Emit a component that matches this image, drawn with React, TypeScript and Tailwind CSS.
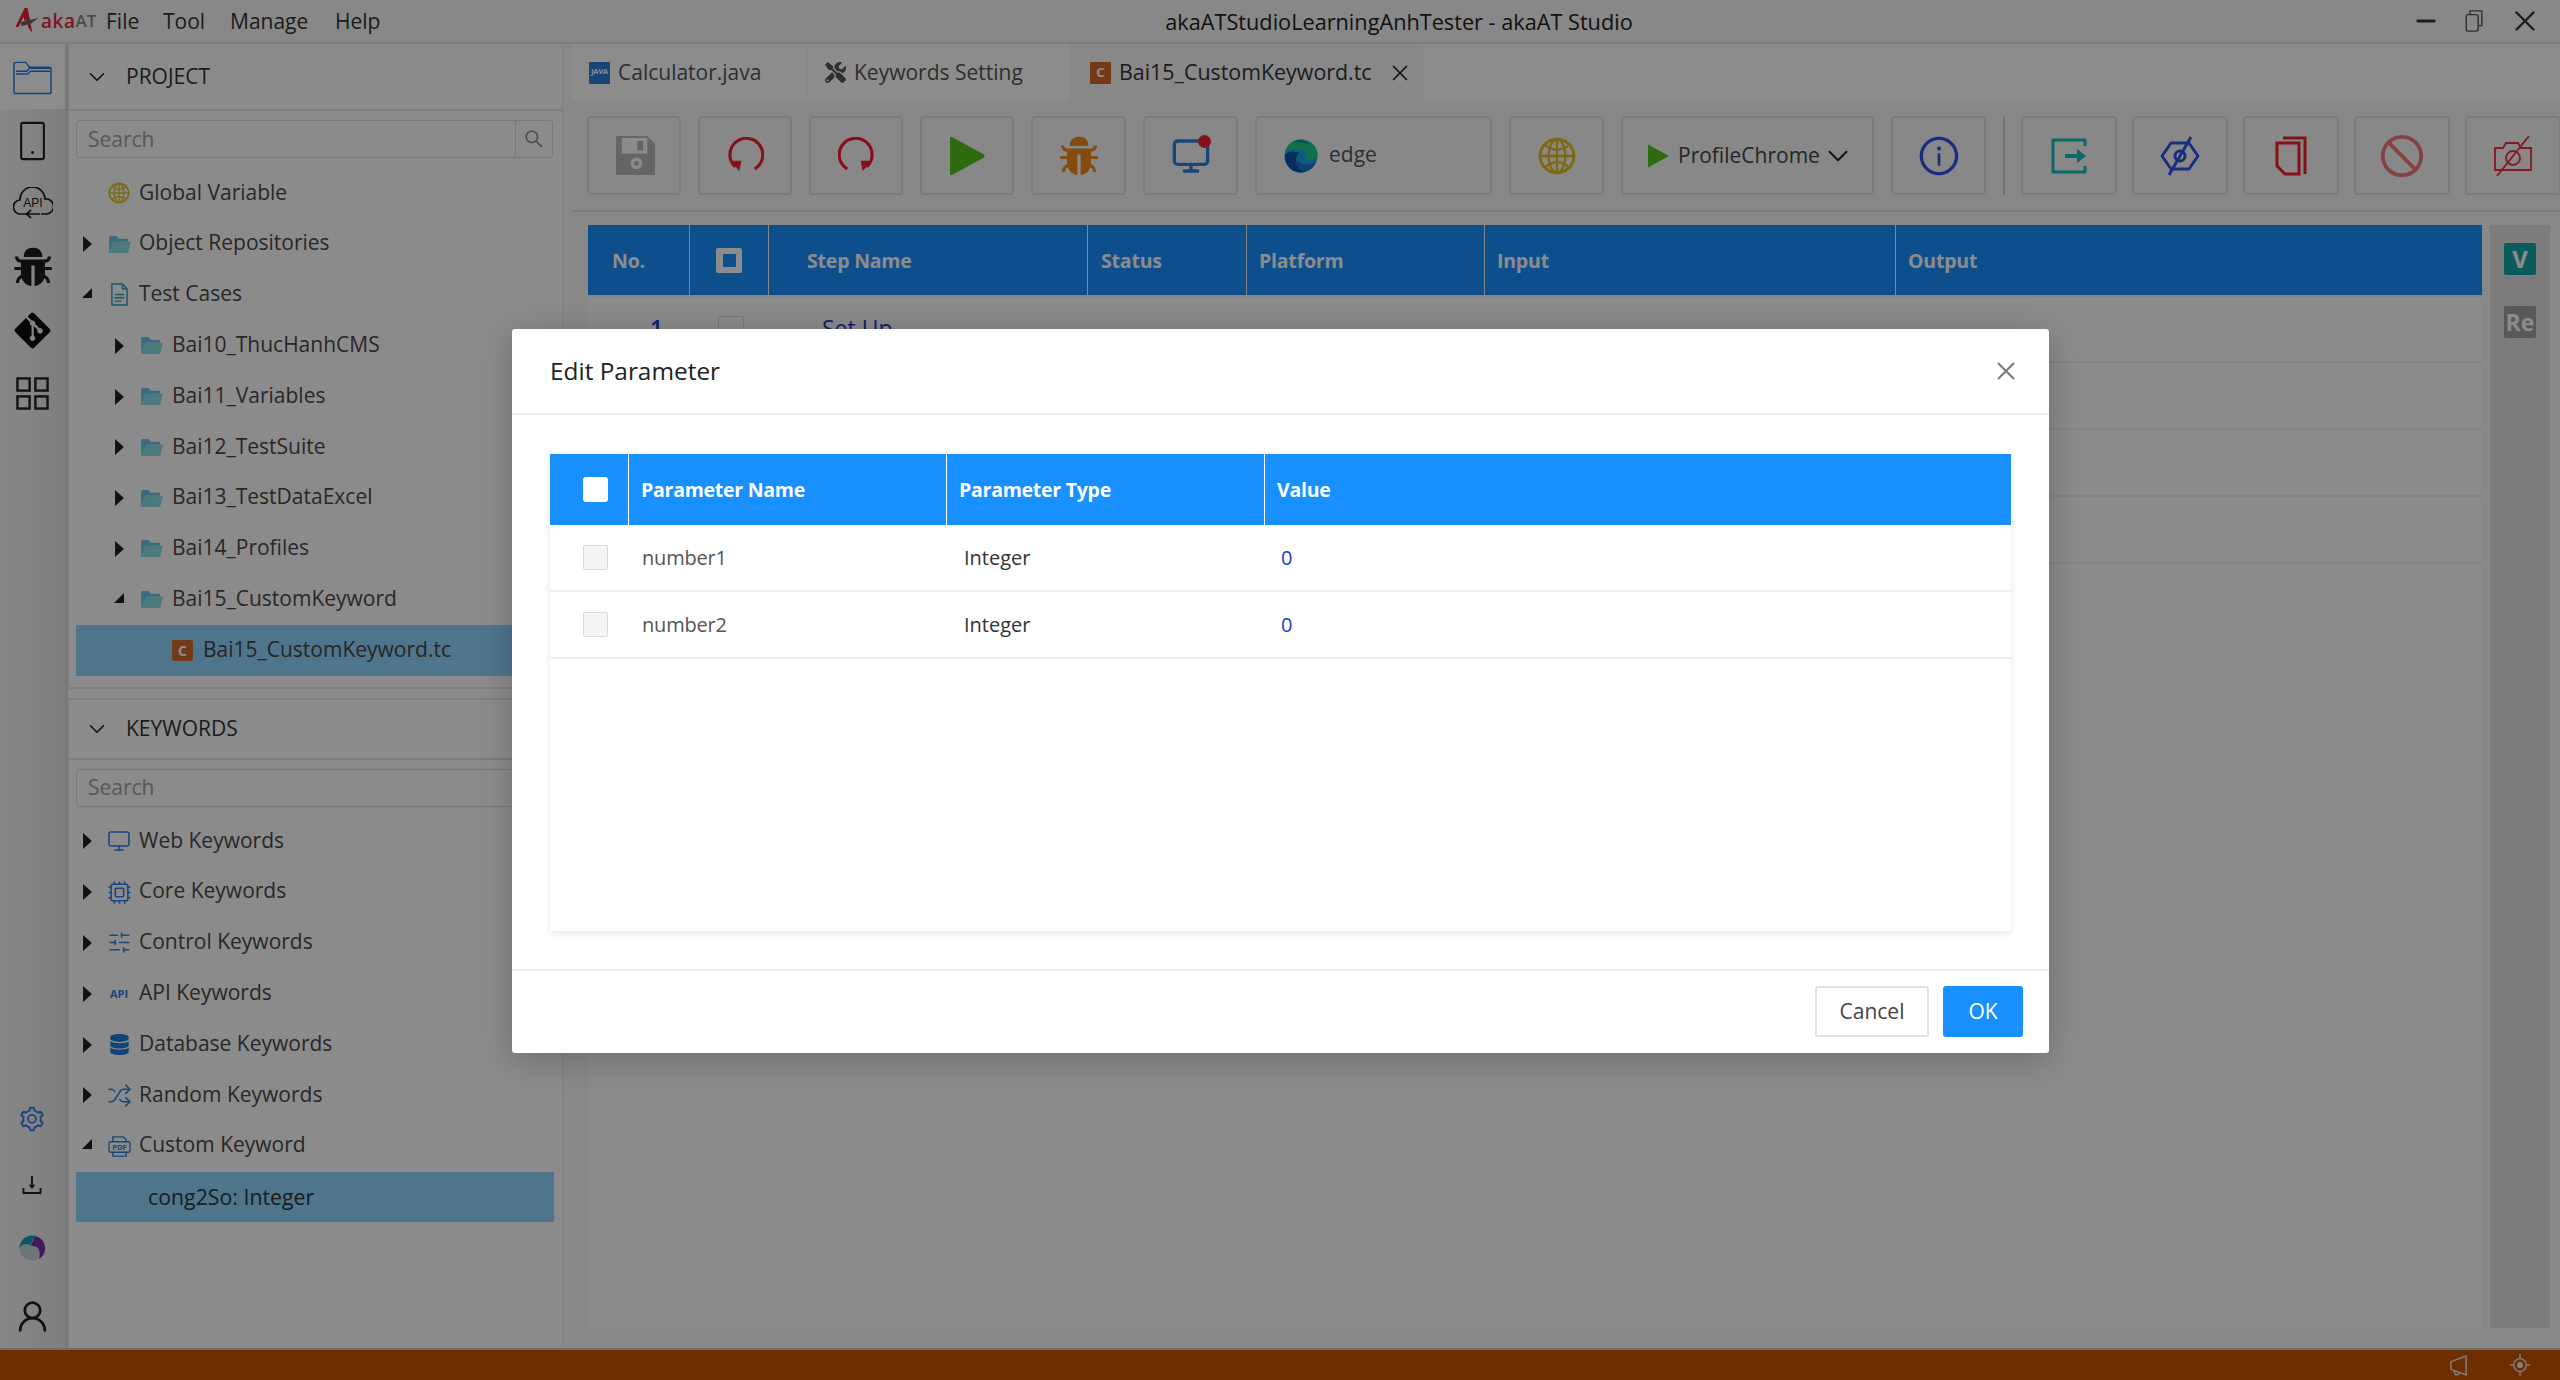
import type { ReactNode } from 'react';
import { AiFillBug, AiOutlineDownload, AiOutlineSetting, AiOutlineSearch, AiOutlineClose, AiOutlineGlobal, AiOutlineInfoCircle } from 'react-icons/ai';
import { FaGitAlt, FaDatabase, FaTools } from 'react-icons/fa';
import { ChevronDown, Cpu, Monitor, Shuffle, SlidersHorizontal, UserRound, X, Minus, Ban } from 'lucide-react';

function FolderFill() {
  return (
    <svg viewBox="0 0 24 20" className="w-[23px] h-[19px]">
      <path d="M1 3a2 2 0 0 1 2-2h6l2 3h10v3H6L1 17z" fill="#6cc4ea" />
      <path d="M5.500 7H24l-3 12H1V17z" fill="#88dce6" />
    </svg>
  );
}

function Caret({ open }: { open?: boolean }) {
  if (open)
    return (
      <svg viewBox="0 0 12 12" className="w-[12px] h-[12px] -mt-1">
        <path d="M11 1v10H1z" fill="#222" />
      </svg>
    );
  return (
    <svg viewBox="0 0 10 18" className="w-[9px] h-[16px]">
      <path d="M0 0l10 9-10 9z" fill="#222" />
    </svg>
  );
}

type Node = { label: string; level: number; caret?: 'open' | 'closed'; icon: ReactNode; selected?: boolean };

const projectTree: Node[] = [
  { label: 'Global Variable', level: 0, icon: <AiOutlineGlobal className="text-[24px] text-[#e6c020]" /> },
  { label: 'Object Repositories', level: 0, caret: 'closed', icon: <FolderFill /> },
  {
    label: 'Test Cases',
    level: 0,
    caret: 'open',
    icon: (
      <svg viewBox="0 0 20 24" className="w-[19px] h-[23px]" fill="none" stroke="#2aa0c4" strokeWidth="1.5">
        <path d="M2 1h11l5 5v17H2z" />
        <path d="M5 12h10M5 15.500h10M5 19h7M13 1v5h5" />
      </svg>
    ),
  },
  { label: 'Bai10_ThucHanhCMS', level: 1, caret: 'closed', icon: <FolderFill /> },
  { label: 'Bai11_Variables', level: 1, caret: 'closed', icon: <FolderFill /> },
  { label: 'Bai12_TestSuite', level: 1, caret: 'closed', icon: <FolderFill /> },
  { label: 'Bai13_TestDataExcel', level: 1, caret: 'closed', icon: <FolderFill /> },
  { label: 'Bai14_Profiles', level: 1, caret: 'closed', icon: <FolderFill /> },
  { label: 'Bai15_CustomKeyword', level: 1, caret: 'open', icon: <FolderFill /> },
];

const keywordTree: Node[] = [
  { label: 'Web Keywords', level: 0, caret: 'closed', icon: <Monitor className="w-[24px] h-[24px] text-[#2f80e8]" strokeWidth={1.6} /> },
  { label: 'Core Keywords', level: 0, caret: 'closed', icon: <Cpu className="w-[25px] h-[25px] text-[#2f80e8]" strokeWidth={1.5} /> },
  { label: 'Control Keywords', level: 0, caret: 'closed', icon: <SlidersHorizontal className="w-[25px] h-[25px] text-[#2f80e8]" strokeWidth={1.5} /> },
  { label: 'API Keywords', level: 0, caret: 'closed', icon: <span className="text-[11px] font-bold text-[#2f80e8] leading-none">API</span> },
  { label: 'Database Keywords', level: 0, caret: 'closed', icon: <FaDatabase className="text-[21px] text-[#1f78e0]" /> },
  { label: 'Random Keywords', level: 0, caret: 'closed', icon: <Shuffle className="w-[25px] h-[25px] text-[#2f80e8]" strokeWidth={1.5} /> },
  {
    label: 'Custom Keyword',
    level: 0,
    caret: 'open',
    icon: (
      <svg viewBox="0 0 24 22" className="w-[23px] h-[21px]" fill="none" stroke="#2f80e8" strokeWidth="1.4">
        <path d="M5 6V1h11l3 3v2M5 17v4h14v-4" />
        <rect x="1" y="6" width="22" height="11" rx="2" />
        <text x="12" y="14.500" textAnchor="middle" fontSize="8" fontWeight="700" fill="#2f80e8" stroke="none" fontFamily="Open Sans">PDF</text>
      </svg>
    ),
  },
];

function TreeRow({ node }: { node: Node }) {
  return (
    <div className={`flex items-center h-[50.800px] text-[21px] text-[#4a4a4a] whitespace-nowrap ${node.level === 1 ? 'pl-[32px]' : ''}`}>
      <div className="w-[35px] shrink-0 flex justify-center pl-px">
        {node.caret && <Caret open={node.caret === 'open'} />}
      </div>
      <div className="w-[30px] shrink-0 flex justify-center">{node.icon}</div>
      <span className={`${node.level === 1 ? 'ml-[6px]' : 'ml-[5px]'} -mt-[2px]`}>{node.label}</span>
    </div>
  );
}

function PanelHeader({ title, h }: { title: string; h: string }) {
  return (
    <div className={`flex items-center ${h} border-b-2 border-[#e4e4e4] text-[21px] text-[#333]`}>
      <ChevronDown className="ml-[15px] w-[26px] h-[26px] text-[#222]" strokeWidth={1.5} />
      <span className="ml-[16px]">{title}</span>
    </div>
  );
}

function RailIcon({ children, h, active }: { children: ReactNode; h: string; active?: boolean }) {
  return <div className={`${h} w-full flex items-center justify-center ${active ? 'bg-white' : ''}`}>{children}</div>;
}

function Rail() {
  return (
    <div className="w-[65px] shrink-0 flex flex-col justify-between bg-gradient-to-r from-[#f6f6f6] to-[#e6e6e6]">
      <div className="flex flex-col">
        <RailIcon h="h-[65px]" active>
          <svg viewBox="0 0 40 36" className="w-[39px] h-[36px]" fill="none" stroke="#1f7ae0" strokeWidth="1.5">
            <path d="M1 5a2 2 0 0 1 2-2h10l4 5h20a2 2 0 0 1 2 2v23a2 2 0 0 1-2 2H3a2 2 0 0 1-2-2z" />
            <path d="M3 12h11l3-3h21M3 15h12l3-3h20" />
          </svg>
        </RailIcon>
        <RailIcon h="h-[64px]">
          <svg viewBox="0 0 26 40" className="w-[25px] h-[40px]" fill="none" stroke="#222" strokeWidth="2.200">
            <rect x="1.200" y="1.200" width="23.600" height="37.600" rx="2" />
            <circle cx="13" cy="32" r="1.500" fill="#222" stroke="none" />
          </svg>
        </RailIcon>
        <RailIcon h="h-[62px]">
          <svg viewBox="0 0 40 34" className="w-[40px] h-[34px]" fill="none" stroke="#1c1c1c" strokeWidth="1.700">
            <path d="M13 27H8a7 7 0 0 1-1-14 12.500 12.500 0 0 1 25-1 7.500 7.500 0 0 1 2 15h-6" />
            <path d="M27 27H14m4-4-4.500 4 4.500 4" />
            <text x="20" y="19.500" textAnchor="middle" fontSize="12" fill="#1c1c1c" stroke="none" fontFamily="Liberation Sans">API</text>
          </svg>
        </RailIcon>
        <RailIcon h="h-[64px]">
          <AiFillBug className="text-[44px] text-[#1c1c1c]" />
        </RailIcon>
        <RailIcon h="h-[62px]">
          <FaGitAlt className="text-[41px] text-[#0c0c0c]" />
        </RailIcon>
        <RailIcon h="h-[64px]">
          <svg viewBox="0 0 34 34" className="w-[33px] h-[33px]" fill="none" stroke="#222" strokeWidth="2.500">
            <rect x="1.500" y="1.500" width="12.500" height="12.500" />
            <rect x="20" y="1.500" width="12.500" height="12.500" />
            <rect x="1.500" y="20" width="12.500" height="12.500" />
            <rect x="20" y="20" width="12.500" height="12.500" />
          </svg>
        </RailIcon>
      </div>
      <div className="flex flex-col">
        <RailIcon h="h-[78px]">
          <AiOutlineSetting className="text-[28px] text-[#2f80e8] -ml-[2px]" />
        </RailIcon>
        <RailIcon h="h-[54px]">
          <AiOutlineDownload className="text-[26px] text-[#222] -ml-[2px]" />
        </RailIcon>
        <RailIcon h="h-[72px]">
          <svg viewBox="0 0 26 26" className="w-[26px] h-[26px] -ml-[2px]">
            <circle cx="13" cy="13" r="12.500" fill="#c5d8de" />
            <path d="M13 .5A12.500 12.500 0 0 0 .5 13c3-5 9-5 12-2 0-4 1-8 5-9.700A12.500 12.500 0 0 0 13 .5z" fill="#0fa2b8" />
            <path d="M17 1.300A12.500 12.500 0 0 1 20 24c1-4 1-8-1-11-2-2-5-2-6.500-2 .5-3 2-8 4.500-9.700z" fill="#7a2fa8" />
          </svg>
        </RailIcon>
        <RailIcon h="h-[64px]">
          <UserRound className="w-[37px] h-[37px] text-[#222]" strokeWidth={1.8} />
        </RailIcon>
      </div>
    </div>
  );
}

function LeftPanel() {
  return (
    <div className="w-[495px] shrink-0 flex flex-col bg-[#fdfdfd]">
      <div className="h-[645px] shrink-0 flex flex-col border-x border-b-2 border-[#e8e8e8]">
        <PanelHeader title="PROJECT" h="h-[67px]" />
        <div className="mt-[9px] ml-[7px] mr-[9px] h-[38px] flex border border-[#dcdcdc] rounded-[3px]">
          <div className="flex-1 pl-[11px] text-[21px] leading-[36px] text-[#a0a0a0]">Search</div>
          <div className="w-[37px] border-l border-[#dcdcdc] flex items-center justify-center">
            <AiOutlineSearch className="text-[22px] text-[#8c8c8c]" />
          </div>
        </div>
        <div className="mt-[10px]">
          {projectTree.map((n) => (
            <TreeRow key={n.label} node={n} />
          ))}
          <div className="ml-[7px] mr-[8px] h-[51px] bg-[#91d5ff] flex items-center text-[21px] text-[#444]">
            <div className="w-[21px] h-[21px] ml-[96px] bg-[#d46b2a] rounded-[2px] flex items-center justify-center text-[14px] font-bold text-white">C</div>
            <span className="ml-[10px] -mt-[2px]">Bai15_CustomKeyword.tc</span>
          </div>
        </div>
      </div>
      <div className="flex-1 mt-[9px] flex flex-col border-x border-t-2 border-[#e8e8e8]">
        <PanelHeader title="KEYWORDS" h="h-[60px]" />
        <div className="mt-[9px] mx-[7px] h-[38px] border border-[#dcdcdc] rounded-[3px] pl-[11px] text-[21px] leading-[35px] text-[#a0a0a0]">Search</div>
        <div className="mt-[9px]">
          {keywordTree.map((n) => (
            <TreeRow key={n.label} node={n} />
          ))}
          <div className="ml-[7px] mr-[8px] h-[50px] bg-[#91d5ff] flex items-center pl-[72px] text-[21.300px] text-[#333]">cong2So: Integer</div>
        </div>
      </div>
    </div>
  );
}

const tabs = [
  { label: 'Calculator.java', w: 'w-[235px]', pl: 'pl-[16px]', icon: <div className="w-[21px] h-[22px] bg-[#2f7fd8] rounded-[1px] flex items-center justify-center text-[7px] font-bold text-white">JAVA</div> },
  { label: 'Keywords Setting', w: 'w-[263px]', pl: 'pl-[17px]', icon: <FaTools className="text-[21px] text-[#555]" /> },
  { label: 'Bai15_CustomKeyword.tc', w: 'w-[352px]', pl: 'pl-[19px]', icon: <div className="w-[21px] h-[22px] bg-[#d46b2a] rounded-[1px] flex items-center justify-center text-[13px] font-bold text-white">C</div>, active: true },
];

function ToolButton({ w, children }: { w: string; children: ReactNode }) {
  return <div className={`${w} shrink-0 h-[79px] border-2 border-[#e2e2e2] rounded-[4px] flex items-center justify-center`}>{children}</div>;
}

function RedoIcon({ flip }: { flip?: boolean }) {
  return (
    <svg viewBox="0 0 36 36" className={`w-[37px] h-[37px] ${flip ? '-scale-x-100' : ''}`} fill="none">
      <path d="M27 31a16 16 0 1 0-19-2" stroke="#f0202f" strokeWidth="3" />
      <path d="M3 23h11l-2 10z" fill="#f0202f" />
    </svg>
  );
}

function EdgeLogo() {
  return (
    <svg viewBox="0 0 34 34" className="w-[34px] h-[36px] ml-[1px]">
      <circle cx="17" cy="17" r="16.500" fill="#19a6e8" />
      <path d="M1 15C3 5 10 .5 17 .5c9 0 16.500 7 16.500 14.500 0 4-3.500 6-7 6-3 0-6-1.500-5-3.500 1-1.500 1-4.500-2.500-6C13 10 4 9 1 15z" fill="#22c98a" />
      <path d="M9 3c6-3 13-2 18 3-5-2-12-3-18-3z" fill="#0f8fb0" />
      <path d="M1 17c0 10 7 16.500 16 16.500 3 0 5-1 5-1-5-.5-10-5-10-11 0-4 1.500-6.500 3.500-8C9 12 2 12 1 17z" fill="#0b4fa8" />
      <path d="M12 21.500c0 6 5 10.500 10 11 4-1.500 8-5 10-9.500-4 2.500-9 3-13 1.500-3-1.200-5-3-7-3z" fill="#1878c8" />
    </svg>
  );
}

function Toolbar() {
  return (
    <div className="h-[112px] shrink-0 border-b-2 border-[#e2e2e2] pl-[15px] pt-[16px] pr-[14px] flex gap-[17px] overflow-hidden">
      <ToolButton w="w-[94px]">
        <svg viewBox="0 0 40 40" className="w-[39px] h-[39px] ml-[2px]">
          <path d="M0 0h32l8 8v32H0z" fill="#b8b8b8" />
          <rect x="6" y="2" width="26" height="16" fill="#fdfdfd" />
          <rect x="22" y="5" width="6" height="10" fill="#b8b8b8" />
          <circle cx="21" cy="28" r="6" fill="#fdfdfd" />
          <circle cx="21" cy="28" r="2.500" fill="#b8b8b8" />
        </svg>
      </ToolButton>
      <ToolButton w="w-[94px]"><RedoIcon /></ToolButton>
      <ToolButton w="w-[94px]"><RedoIcon flip /></ToolButton>
      <ToolButton w="w-[94px]">
        <svg viewBox="0 0 36 40" className="w-[36px] h-[40px]">
          <path d="M1 2.500Q1 0 3 1L35 18.500Q36 20 35 21.500L3 39Q1 40 1 37.500z" fill="#52c41a" />
        </svg>
      </ToolButton>
      <ToolButton w="w-[95px]"><AiFillBug className="text-[44px] text-[#f08a1c]" /></ToolButton>
      <ToolButton w="w-[95px]">
        <div className="relative">
          <Monitor className="w-[40px] h-[40px] text-[#2f7fe0]" strokeWidth={2} />
          <div className="absolute -top-[1px] right-0 w-[13px] h-[13px] rounded-full bg-[#f5222d]" />
        </div>
      </ToolButton>
      <div className="w-[237px] shrink-0 h-[79px] border-2 border-[#e2e2e2] rounded-[4px] flex items-center pl-[26px] text-[21px] text-[#555]">
        <EdgeLogo />
        <span className="ml-[11px] -mt-[2px]">edge</span>
      </div>
      <ToolButton w="w-[95px]"><AiOutlineGlobal className="text-[42px] text-[#e6c020]" /></ToolButton>
      <div className="w-[253px] shrink-0 h-[79px] border-2 border-[#e2e2e2] rounded-[4px] flex items-center pl-[25px] text-[21px] text-[#444]">
        <svg viewBox="0 0 22 24" className="w-[21px] h-[24px]"><path d="M0 0l22 12L0 24z" fill="#52c41a" /></svg>
        <span className="ml-[9px]">ProfileChrome</span>
        <ChevronDown className="ml-[1px] w-[34px] h-[34px] text-[#222]" strokeWidth={1.4} />
      </div>
      <ToolButton w="w-[95px]"><AiOutlineInfoCircle className="text-[44px] text-[#2f54eb]" /></ToolButton>
      <div className="w-[2px] h-[79px] -mr-px bg-[#d2d2d2] shrink-0" />
      <div className="flex gap-[15px]">
        <ToolButton w="w-[96px]">
          <svg viewBox="0 0 36 36" className="w-[36px] h-[36px]" fill="none">
            <path d="M34 8V2H2v32h32v-6" stroke="#13c2c2" strokeWidth="3" />
            <path d="M14 18h14" stroke="#13c2c2" strokeWidth="4" />
            <path d="M26 11l9 7-9 7z" fill="#13c2c2" />
          </svg>
        </ToolButton>
        <ToolButton w="w-[96px]">
          <svg viewBox="0 0 40 40" className="w-[40px] h-[40px]" fill="none" stroke="#2f54eb" strokeWidth="3">
            <path d="M2 20 11 7h18l9 13-9 13H11z" strokeLinejoin="round" />
            <circle cx="20" cy="20" r="5" />
            <path d="M31 1 9 39" />
          </svg>
        </ToolButton>
        <ToolButton w="w-[96px]">
          <svg viewBox="0 0 32 40" className="w-[32px] h-[40px]" fill="none" stroke="#f0202f" strokeWidth="3">
            <path d="M8 2h22v36" />
            <path d="M2 7h22v31H10l-8-8z" />
          </svg>
        </ToolButton>
        <ToolButton w="w-[96px]"><Ban className="w-[46px] h-[46px] text-[#f07a7a]" strokeWidth={2} /></ToolButton>
        <ToolButton w="w-[96px]">
          <svg viewBox="0 0 40 40" className="w-[40px] h-[40px]" fill="none" stroke="#f0303f" strokeWidth="1.800">
            <path d="M2 12h8l3-5h12l3 5h10v22H2z" />
            <circle cx="20" cy="22" r="7" />
            <path d="M36 0 4 40" />
          </svg>
        </ToolButton>
      </div>
    </div>
  );
}

const columns = [
  { w: 'w-[102px]', label: 'No.', pl: 'pl-[24px]' },
  { w: 'w-[79px]', label: '', pl: '' },
  { w: 'w-[319px]', label: 'Step Name', pl: 'pl-[38px]' },
  { w: 'w-[159px]', label: 'Status', pl: 'pl-[13px]' },
  { w: 'w-[238px]', label: 'Platform', pl: 'pl-[12px]' },
  { w: 'w-[411px]', label: 'Input', pl: 'pl-[12px]' },
  { w: 'flex-1', label: 'Output', pl: 'pl-[12px]' },
];

function StepTable() {
  return (
    <div className="w-[1894px] ml-[16px] shrink-0 bg-[#fdfdfd]">
      <div className="h-[72px] flex bg-[#1890ff] border-b-2 border-[#f0f0f0]">
        {columns.map((c, i) => (
          <div key={i} className={`${c.w} ${c.pl} ${i < columns.length - 1 ? 'border-r border-[#f0f0f0]' : ''} flex items-center pt-[1px] text-[19.500px] tracking-[-0.2px] font-bold text-white`}>
            {i === 1 && (
              <div className="mx-auto w-[26px] h-[25px] bg-white rounded-[2px] flex items-center justify-center">
                <div className="w-[13px] h-[13px] bg-[#1890ff]" />
              </div>
            )}
            {c.label}
          </div>
        ))}
      </div>
      <div className="h-[67px] flex items-center border-b-2 border-[#f0f0f0] text-[23px] font-semibold text-[#1d39c4] -mt-px">
        <span className="ml-[62px] w-[68px]">1</span>
        <div className="w-[26px] h-[26px] border border-[#d9d9d9] rounded-[2px]" />
        <span className="ml-[78px] font-normal">Set Up</span>
      </div>
      <div className="h-[67px] border-b-2 border-[#f0f0f0]" />
      <div className="h-[67px] border-b-2 border-[#f0f0f0]" />
      <div className="h-[67px] border-b-2 border-[#f0f0f0]" />
    </div>
  );
}

function SideRail() {
  return (
    <div className="w-[60px] ml-[8px] shrink-0 bg-[#e4e1e2] flex flex-col items-center gap-[31px] pt-[18px]">
      <div className="w-[32px] h-[32px] rounded-[2px] bg-[#13a8a8] flex items-center justify-center text-[24px] font-bold text-white">V</div>
      <div className="w-[32px] h-[32px] rounded-[2px] bg-[#a0a0a0] flex items-center justify-center text-[23px] font-bold text-white">Re</div>
    </div>
  );
}

function Main() {
  return (
    <div className="flex-1 min-w-0 flex flex-col bg-[#f8f8f8]">
      <div className="h-[56px] shrink-0 flex pl-[1px] bg-white">
        {tabs.map((t) => (
          <div key={t.label} className={`${t.w} ${t.pl} pt-[1px] flex items-center ${t.active ? 'text-[21.400px] bg-[#f8f8f8] text-[#333]' : 'text-[21px] text-[#555] border-r border-[#f4f4f4]'}`}>
            {t.icon}
            <span className="ml-[8px] whitespace-nowrap">{t.label}</span>
            {t.active && <X className="ml-[15px] w-[26px] h-[26px] text-[#222]" strokeWidth={1.6} />}
          </div>
        ))}
      </div>
      <Toolbar />
      <div className="flex-1 min-h-0 pt-[13px]">
        <div className="h-[1103px] flex">
          <StepTable />
          <SideRail />
        </div>
      </div>
    </div>
  );
}

function EditParameter() {
  return (
    <div className="w-[1537px] h-[724px] bg-white rounded-[3px] shadow-[0_6px_32px_rgba(0,0,0,0.22)] flex flex-col">
      <div className="h-[86px] shrink-0 border-b-2 border-[#f0f0f0] flex items-center justify-between pl-[38px] pr-[32px]">
        <span className="text-[24.400px] font-medium text-[#222]">Edit Parameter</span>
        <AiOutlineClose className="text-[26px] text-[#7a7a7a] -mr-[2px]" />
      </div>
      <div className="flex-1 min-h-0 pt-[39px] px-[38px]">
        <div className="h-[477px] shadow-[0_2px_8px_rgba(0,0,0,0.10)]">
          <div className="h-[71px] flex bg-[#1890ff] text-[19.500px] tracking-[-0.25px] font-bold text-white">
            <div className="w-[79px] border-r border-white flex items-center pl-[33px]">
              <div className="w-[25px] h-[25px] bg-white rounded-[3px]" />
            </div>
            <div className="w-[318px] border-r border-white flex items-center pl-[12px]">Parameter Name</div>
            <div className="w-[318px] border-r border-white flex items-center pl-[12px]">Parameter Type</div>
            <div className="flex-1 flex items-center pl-[12px]">Value</div>
          </div>
          {['number1', 'number2'].map((n) => (
            <div key={n} className="h-[67px] flex items-center border-b-2 border-[#f0f0f0] text-[20px]">
              <div className="w-[79px] pl-[33px]">
                <div className="w-[25px] h-[25px] bg-[#f5f5f5] border border-[#d9d9d9] rounded-[2px]" />
              </div>
              <div className="w-[318px] pl-[13px] text-[#555] tracking-[-0.2px]">{n}</div>
              <div className="w-[318px] pl-[17px] text-[#333]">Integer</div>
              <div className="pl-[16px] text-[#1d39c4]">0</div>
            </div>
          ))}
        </div>
      </div>
      <div className="h-[84px] shrink-0 border-t-2 border-[#f0f0f0] flex items-start justify-end gap-[14px] pt-[15px] pr-[26px] text-[21px]">
        <div className="w-[114px] h-[51px] border-2 border-[#e2e2e2] rounded-[3px] flex items-center justify-center text-[#444]">Cancel</div>
        <div className="w-[80px] h-[51px] bg-[#1890ff] rounded-[3px] flex items-center justify-center text-white">OK</div>
      </div>
    </div>
  );
}

export default function App() {
  return (
    <div className="relative w-[2560px] h-[1380px] overflow-hidden flex flex-col bg-[#fdfdfd] font-['Open_Sans',sans-serif]">
      <div className="relative h-[44px] shrink-0 flex items-center bg-[#f8f8f8] border-b-2 border-[#e4e4e4]">
        <div className="flex items-center ml-[15px] w-[91px]">
          <svg viewBox="0 0 24 26" className="w-[25px] h-[26px]">
            <path d="M0 19 9 0h3l2 11-5 2-1-4-5 10z" fill="#f02030" />
            <path d="M12 0l5 25-4-5-3-12z" fill="#f02030" />
            <path d="M5 14l18-4-8 6-9 2z" fill="#666" />
          </svg>
          <span className="text-[19px] font-semibold text-[#e8283a] ml-[1px] tracking-[0.5px]">aka</span>
          <span className="text-[17px] font-semibold text-[#888]">AT</span>
        </div>
        <div className="flex text-[21px] text-[#333] pt-[2px]">
          <span className="w-[57px]">File</span>
          <span className="w-[67px]">Tool</span>
          <span className="w-[105px]">Manage</span>
          <span>Help</span>
        </div>
        <div className="absolute left-0 right-0 text-center pl-[238px] pt-[2px] text-[21.700px] text-[#222]">akaATStudioLearningAnhTester - akaAT Studio</div>
        <div className="ml-auto flex items-center text-[#333]">
          <Minus className="w-[28px] h-[28px]" strokeWidth={2.500} />
          <svg viewBox="0 0 20 24" className="ml-[25px] w-[19px] h-[22px]" fill="none" stroke="#555" strokeWidth="1.500">
            <rect x="1" y="5" width="13" height="18" rx="2" />
            <path d="M5 5V1h13v16h-4" />
          </svg>
          <X className="ml-[24px] mr-[18px] w-[34px] h-[34px]" strokeWidth={1.700} />
        </div>
      </div>
      <div className="flex-1 min-h-0 flex">
        <Rail />
        <div className="w-[3px] shrink-0 bg-[#dcdcdc]" />
        <LeftPanel />
        <div className="w-[9px] shrink-0 bg-[#f8f8f8]" />
        <Main />
      </div>
      <div className="h-[32px] shrink-0 bg-[#ca5400] border-t-2 border-[#c8c8c8] flex items-center justify-end pr-[30px]">
        <svg viewBox="0 0 20 22" className="w-[19px] h-[21px] mr-[42px]" fill="none" stroke="#e8e8e8" strokeWidth="1.500">
          <path d="M18 1v20L2 15V7zM5 16l2 5 4-1" />
        </svg>
        <svg viewBox="0 0 22 24" className="w-[20px] h-[24px]" fill="none" stroke="#e8e8e8" strokeWidth="1.500">
          <circle cx="11" cy="12" r="7" />
          <circle cx="11" cy="12" r="2.500" fill="#e8e8e8" />
          <path d="M11 0v5M11 19v5M0 12h4M18 12h4" />
        </svg>
      </div>
      <div className="absolute inset-0 bg-black/45 flex items-start justify-center pt-[329px] pl-[1px]">
        <EditParameter />
      </div>
    </div>
  );
}
